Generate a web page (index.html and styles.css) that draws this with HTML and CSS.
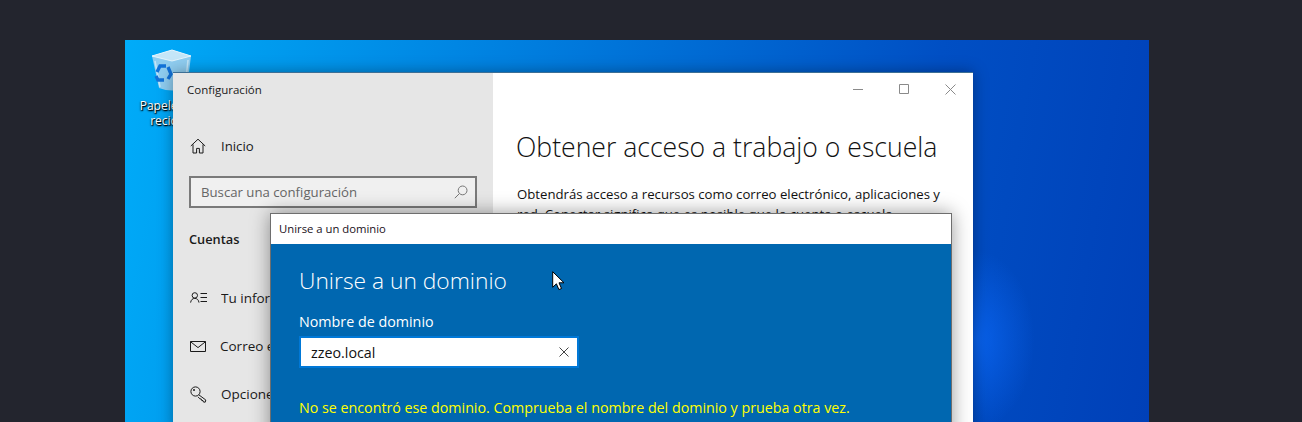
FILE: index.html
```html
<!DOCTYPE html>
<html lang="es">
<head>
<meta charset="utf-8">
<title>Unirse a un dominio</title>
<link rel="stylesheet" href="styles.css">
</head>
<body>
<main class="desktop">
  <div class="glow"></div>
  <div class="recycle">
    <svg class="bin" width="42" height="44" viewBox="0 0 42 44">
      <path d="M0 7 L20 1 L39 7 L35 39 Q20 44 7 39 Z" fill="#8fcdf0"/>
      <path d="M0 7 L20 1 L39 7 L20 12 Z" fill="#c4e6f8" stroke="#e4f5fd" stroke-width="1"/>
      <path d="M3 12 L8 38 M36 11 L33 39" stroke="#c4e6f8" stroke-width="1.500" fill="none"/>
      <g fill="none" stroke="#1272d8" stroke-width="3.400">
        <path d="M5 23 L8 17 L14 17"/>
        <path d="M16 18 L19 25 L16 30"/>
        <path d="M12 31 L6 31 L4 27"/>
      </g>
    </svg>
    <div class="recycle-label">Papelera de<br>reciclaje</div>
  </div>

  <section class="settings">
    <aside class="sidebar">
      <div class="app-title">Configuración</div>
      <div class="nav-home">
        <svg class="nav-icon" width="16" height="16" viewBox="0 0 16 16"><path d="M.8 8 8 1.2 15.200 8M3 6.400V15h3.600v-4.600h2.800V15H13V6.400" fill="none" stroke="#1a1a1a" stroke-width="1"/></svg>
        <span>Inicio</span>
      </div>
      <div class="search">
        <span>Buscar una configuración</span>
        <svg width="14" height="14" viewBox="0 0 14 14"><circle cx="8.600" cy="5.400" r="4.400" fill="none" stroke="#777" stroke-width="1"/><path d="M5.400 8.600.8 13.200" stroke="#777" stroke-width="1"/></svg>
      </div>
      <div class="group">Cuentas</div>
      <ul class="nav">
        <li>
          <svg class="nav-icon" width="17" height="12" viewBox="0 0 17 12"><circle cx="4.800" cy="3.400" r="2.700" fill="none" stroke="#1a1a1a"/><path d="M.6 10.600C1 7.800 2.600 6.400 4.800 6.400s3.800 1.400 4.200 4.200M10.500 1.500H17M10.500 5.500H17M10.500 9.500H17" fill="none" stroke="#1a1a1a"/></svg>
          <span class="nav-text">Tu información</span>
        </li>
        <li>
          <svg class="nav-icon" width="16" height="11" viewBox="0 0 16 11"><path d="M.5.5h15v10H.5zM.5.7 8 6.600 15.500.7" fill="none" stroke="#1a1a1a"/></svg>
          <span class="nav-text">Correo electrónico</span>
        </li>
        <li>
          <svg class="nav-icon" width="17" height="17" viewBox="0 0 17 17"><circle cx="5.500" cy="5.500" r="4.600" fill="none" stroke="#1a1a1a"/><circle cx="4" cy="4" r="1" fill="#1a1a1a"/><path d="M8.800 8.800l7 5.200-.6 2.200-1.800-.2-.4-1.400-1.400-.2-.4-1.400-1.400-.2-1.800-2" fill="none" stroke="#1a1a1a"/></svg>
          <span class="nav-text">Opciones de inicio</span>
        </li>
      </ul>
    </aside>
    <div class="content">
      <div class="window-controls">
        <svg width="10" height="10" viewBox="0 0 10 10"><path d="M0 5.500h10" stroke="#8a8a8a"/></svg>
        <svg width="10" height="10" viewBox="0 0 10 10"><path d="M.5.5h9v9h-9z" fill="none" stroke="#8a8a8a"/></svg>
        <svg width="11" height="11" viewBox="0 0 11 11"><path d="M.5.5l10 10M10.500.5l-10 10" stroke="#8a8a8a"/></svg>
      </div>
      <h1>Obtener acceso a trabajo o escuela</h1>
      <p>Obtendrás acceso a recursos como correo electrónico, aplicaciones y red. Conectar significa que es posible que la cuenta o escuela</p>
    </div>
  </section>

  <section class="dialog">
    <header class="dialog-title">Unirse a un dominio</header>
    <div class="dialog-body">
      <h2>Unirse a un dominio</h2>
      <label class="field-label" for="domain">Nombre de dominio</label>
      <div class="field">
        <span id="domain">zzeo.local</span>
        <svg width="10" height="10" viewBox="0 0 10 10"><path d="M.5.5l9 9M9.500.5l-9 9" stroke="#444" stroke-width="1"/></svg>
      </div>
      <p class="error">No se encontró ese dominio. Comprueba el nombre del dominio y prueba otra vez.</p>
    </div>
  </section>

  <svg class="cursor" width="13" height="20" viewBox="0 0 13 20"><path d="M.7.7v15.600l3.700-3.500 2.500 5.800 2.600-1.100-2.500-5.700h5z" fill="#fff" stroke="#000" stroke-width="1"/></svg>
</main>
</body>
</html>
```

FILE: styles.css
```css
* { box-sizing: border-box; }
html, body {
  margin: 0;
  height: 422px;
  overflow: hidden;
  background: #23252e;
}
body {
  padding: 40px 153px 0 125px;
  font-family: "Open Sans", "Noto Sans", sans-serif;
}
.desktop {
  position: relative;
  width: 1024px;
  height: 382px;
  overflow: hidden;
  background: linear-gradient(100deg, #00acf9 0%, #009ff0 10%, #0084e2 32%, #0068d2 55%, #004fc4 75%, #0040b8 100%);
}
.glow {
  position: absolute;
  left: 820px;
  top: 210px;
  width: 90px;
  height: 180px;
  background: radial-gradient(ellipse at 35% 50%, rgba(10, 100, 240, .85), rgba(10, 100, 240, 0) 70%);
}
.recycle {
  position: absolute;
  left: 3px;
  top: 9px;
  width: 90px;
  display: flex;
  flex-direction: column;
  align-items: center;
}
.bin { display: block; }
.recycle-label {
  margin-top: 5px;
  color: #fff;
  font-size: 12px;
  line-height: 15px;
  text-align: center;
  text-shadow: 0 1px 2px #000, 1px 1px 1px #000;
}
.settings {
  position: absolute;
  left: 48px;
  top: 32px;
  width: 800px;
  height: 360px;
  display: flex;
  background: #fff;
  box-shadow: 0 0 14px rgba(0, 0, 0, .35);
  border-top: 1px solid #3d6f95;
}
.sidebar {
  width: 320px;
  background: #e6e6e6;
  padding: 0 16px;
  color: #1a1a1a;
}
.app-title {
  margin: 8px 0 0 -2px;
  font-size: 11.500px;
  line-height: 18px;
}
.nav-home {
  display: flex;
  align-items: center;
  gap: 15px;
  margin-top: 37px;
  font-size: 13.200px;
  line-height: 20px;
}
.search {
  display: flex;
  justify-content: space-between;
  align-items: center;
  width: 288px;
  height: 32px;
  margin-top: 20px;
  padding: 0 7px 0 10px;
  border: 2px solid #7a7a7a;
  background: #f0f0f0;
  color: #666;
  font-size: 13.200px;
}
.group {
  margin-top: 21px;
  font-size: 12.800px;
  font-weight: 600;
  line-height: 20px;
}
.nav {
  list-style: none;
  margin: 25px 0 0;
  padding: 0;
}
.nav li {
  display: flex;
  align-items: center;
  gap: 14px;
  height: 48px;
  font-size: 13.500px;
  white-space: nowrap;
}
.nav-text {
  width: 52px;
  overflow: hidden;
}
.nav-icon { flex: none; margin-left: 1px; }
.content {
  flex: 1;
  padding: 0 24px;
  color: #111;
}
.window-controls {
  display: flex;
  justify-content: flex-end;
  align-items: center;
  gap: 36px;
  height: 32px;
  margin-right: -7px;
}
h1 {
  margin: 23px 0 0 -1px;
  font-size: 26.600px;
  font-weight: 300;
  line-height: 38px;
  white-space: nowrap;
}
.content p {
  margin: 18px 0 0;
  font-size: 13.200px;
  line-height: 20px;
}
.dialog {
  position: absolute;
  left: 145px;
  top: 173px;
  width: 682px;
  height: 300px;
  border: 1px solid #6e6e6e;
  box-shadow: 0 0 18px rgba(0, 0, 0, .4);
  background: #0067b0;
}
.dialog-title {
  height: 30px;
  padding-left: 8px;
  background: #fff;
  color: #1a1020;
  font-size: 11.300px;
  line-height: 30px;
}
.dialog-body {
  padding: 20px 28px;
  color: #fff;
}
h2 {
  margin: 0;
  font-size: 22.800px;
  font-weight: 300;
  line-height: 34px;
  white-space: nowrap;
}
.field-label {
  display: block;
  margin-top: 14px;
  font-size: 14.300px;
  line-height: 20px;
}
.field {
  display: flex;
  justify-content: space-between;
  align-items: center;
  width: 280px;
  height: 32px;
  margin-top: 4px;
  padding: 0 8px 0 10px;
  background: #fff;
  border: 2px solid #0078d7;
  color: #111;
  font-size: 14.300px;
}
.error {
  margin: 30px 0 0;
  color: #ffff00;
  font-size: 14.250px;
  line-height: 20px;
  white-space: nowrap;
}
.cursor {
  position: absolute;
  left: 427px;
  top: 231px;
}
```
